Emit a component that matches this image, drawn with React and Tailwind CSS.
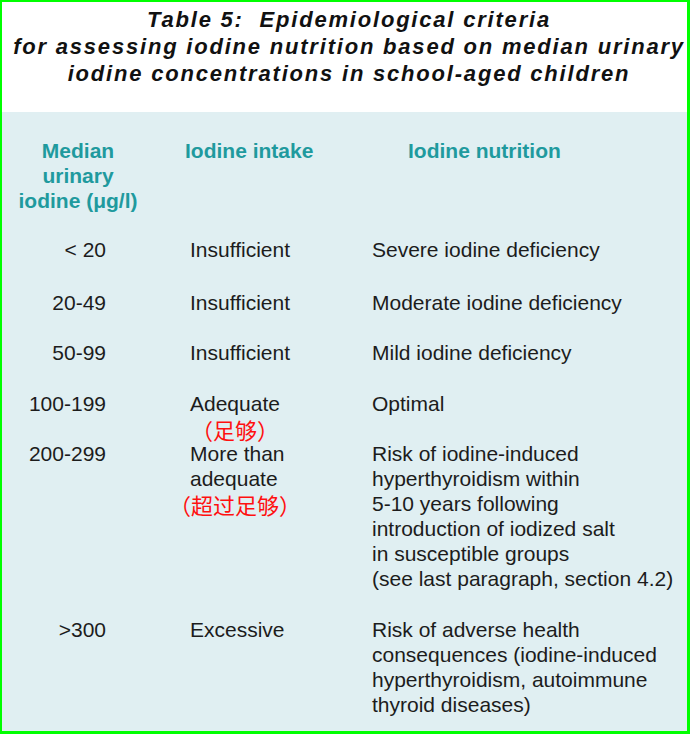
export default function App() {
  const body = "font-['Liberation_Sans',Arial,sans-serif]";
  const cjk = "font-['Noto_Sans_CJK_SC','Liberation_Sans',sans-serif]";
  const rows = [
    { mt: "mt-[24px]", v: "< 20", intake: ["Insufficient"], nut: ["Severe iodine deficiency"] },
    { mt: "mt-[28px]", v: "20-49", intake: ["Insufficient"], nut: ["Moderate iodine deficiency"] },
    { mt: "mt-[25px]", v: "50-99", intake: ["Insufficient"], nut: ["Mild iodine deficiency"] },
    { mt: "mt-[26px]", v: "100-199", intake: ["Adequate"], cn: "（足够）", nut: ["Optimal"] },
    {
      mt: "mt-0",
      v: "200-299",
      intake: ["More than", "adequate"],
      cn: "（超过足够）",
      nut: [
        "Risk of iodine-induced",
        "hyperthyroidism within",
        "5-10 years following",
        "introduction of iodized salt",
        "in susceptible groups",
        "(see last paragraph, section 4.2)",
      ],
    },
    {
      mt: "mt-[26px]",
      v: ">300",
      intake: ["Excessive"],
      nut: [
        "Risk of adverse health",
        "consequences (iodine-induced",
        "hyperthyroidism, autoimmune",
        "thyroid diseases)",
      ],
    },
  ];
  return (
    <div className={`w-[690px] h-[734px] overflow-hidden border-[#00ff00] border-t-2 border-l-2 border-r-[3px] border-b-[3px] flex flex-col ${body}`}>
      <div className="h-[110px] bg-white pt-[4px] pl-[9px] text-center text-[22px] leading-[27px] font-bold italic tracking-[1.8px] text-[#111] whitespace-nowrap">
        <div>Table 5:&nbsp; Epidemiological criteria</div>
        <div>for assessing iodine nutrition based on median urinary</div>
        <div>iodine concentrations in school-aged children</div>
      </div>
      <div className="flex-1 bg-[#e0eff2] pt-[26px] text-[21px] leading-[25px]">
        <div className="flex font-bold text-[#1f9a9e]">
          <div className="w-[152px] text-center">
            <div>Median</div>
            <div>urinary</div>
            <div>iodine (μg/l)</div>
          </div>
          <div className="w-[220px] pl-[31px]">Iodine intake</div>
          <div className="pl-[34px]">Iodine nutrition</div>
        </div>
        {rows.map((r, i) => (
          <div key={i} className={`flex text-[#1c1c1c] ${r.mt}`}>
            <div className="w-[104px] text-right">{r.v}</div>
            <div className="w-[182px] ml-[84px]">
              {r.intake.map((t, j) => (
                <div key={j} className="whitespace-nowrap">{t}</div>
              ))}
              {r.cn && (
                <div className={`w-[90px] h-[25px] flex justify-center items-center whitespace-nowrap text-[22px] leading-[22px] text-[#ff1010] ${cjk}`}>
                  <span>{r.cn}</span>
                </div>
              )}
            </div>
            <div>
              {r.nut.map((t, j) => (
                <div key={j} className="whitespace-nowrap">{t}</div>
              ))}
            </div>
          </div>
        ))}
      </div>
    </div>
  );
}
